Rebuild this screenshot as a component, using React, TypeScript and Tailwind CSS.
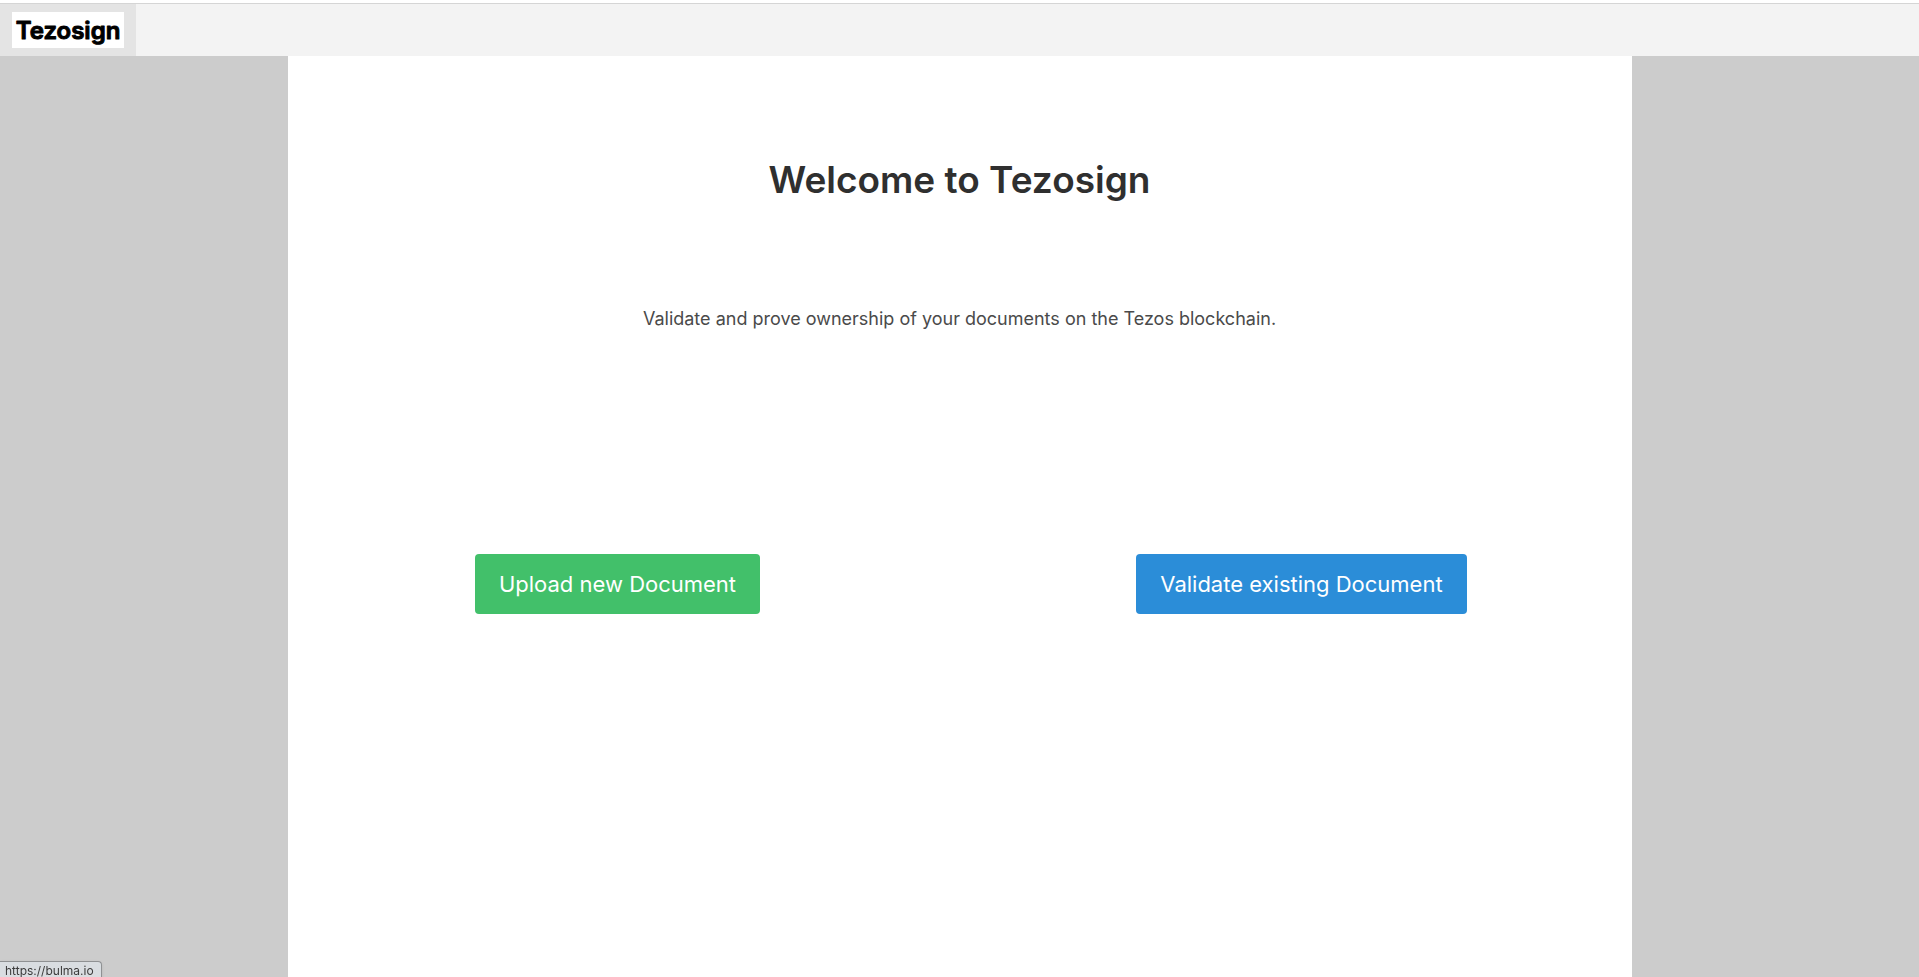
const Logo = () => {
  return (
    <svg width="112" height="36" viewBox="0 0 112 36" role="img" aria-label="Tezosign" className="bg-white">
      <text
        x="56"
        y="27"
        textAnchor="middle"
        strokeLinejoin="round"
        strokeWidth="1"
        className="fill-black stroke-black font-[Inter,sans-serif] text-2xl font-semibold"
      >
        Tezosign
      </text>
    </svg>
  );
};

const Navbar = () => {
  return (
    <nav className="flex h-[53px] border-t border-[#d5d5d5] bg-[#f3f3f3]">
      <a href="https://bulma.io" className="flex items-center bg-[#e4e4e4] px-3">
        <Logo />
      </a>
    </nav>
  );
};

const App = () => {
  return (
    <div className="flex min-h-screen flex-col bg-[#cccccc] pt-[3px] font-[Inter,sans-serif] shadow-[inset_0_3px_0_#ffffff]">
      <Navbar />

      <main className="mx-auto w-full max-w-[1344px] grow bg-white px-3 pt-[100px] text-center">
        <h1 className="text-[37px] leading-[48px] font-semibold text-[#2f2f2f]">Welcome to Tezosign</h1>
        <p className="mt-[101px] text-lg leading-7 text-[#4a4a4a]">
          Validate and prove ownership of your documents on the Tezos blockchain.
        </p>

        <div className="-mx-6 mt-[221px] grid grid-cols-2">
          <div>
            <button type="button" className="h-[60px] rounded bg-[#42c06a] px-6 text-[22px] text-white">
              Upload new Document
            </button>
          </div>
          <div>
            <button type="button" className="h-[60px] rounded bg-[#2b8dd8] px-6 text-[22px] text-white">
              Validate existing Document
            </button>
          </div>
        </div>
      </main>

      {/* Link preview in the window corner */}
      <div className="fixed bottom-0 left-0 h-4 rounded-tr border-t border-r border-[#8f9193] bg-[#d9dde1] pr-[7px] pl-[5px] text-xs leading-[18px] text-[#3c3c3c] shadow-sm">
        https://bulma.io
      </div>
    </div>
  );
};

export default App;
